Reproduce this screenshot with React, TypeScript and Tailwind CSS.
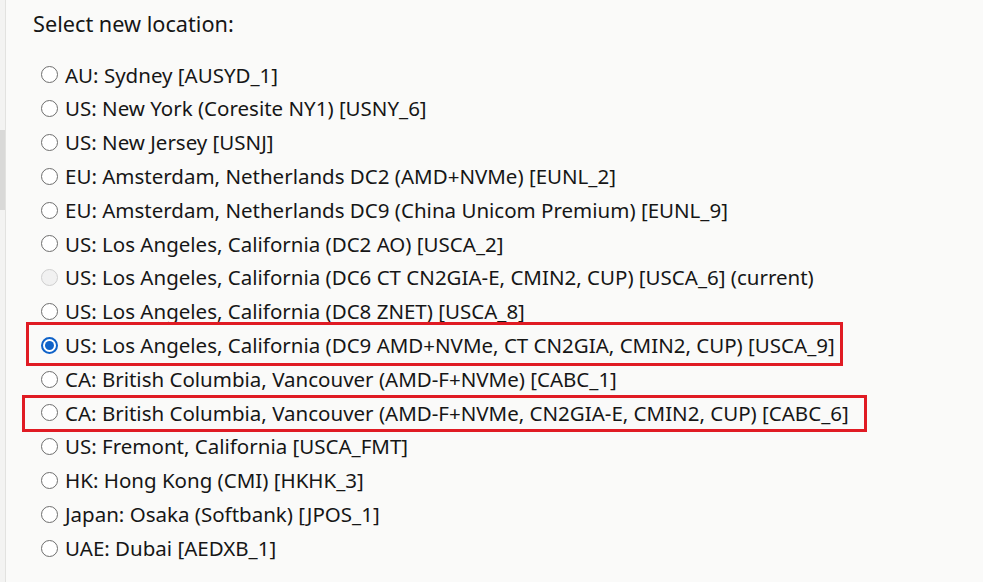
import React from "react"

type Loc = { label: string; disabled?: boolean; checked?: boolean }

const locations: Loc[] = [
  { label: "AU: Sydney [AUSYD_1]" },
  { label: "US: New York (Coresite NY1) [USNY_6]" },
  { label: "US: New Jersey [USNJ]" },
  { label: "EU: Amsterdam, Netherlands DC2 (AMD+NVMe) [EUNL_2]" },
  { label: "EU: Amsterdam, Netherlands DC9 (China Unicom Premium) [EUNL_9]" },
  { label: "US: Los Angeles, California (DC2 AO) [USCA_2]" },
  { label: "US: Los Angeles, California (DC6 CT CN2GIA-E, CMIN2, CUP) [USCA_6] (current)", disabled: true },
  { label: "US: Los Angeles, California (DC8 ZNET) [USCA_8]" },
  { label: "US: Los Angeles, California (DC9 AMD+NVMe, CT CN2GIA, CMIN2, CUP) [USCA_9]", checked: true },
  { label: "CA: British Columbia, Vancouver (AMD-F+NVMe) [CABC_1]" },
  { label: "CA: British Columbia, Vancouver (AMD-F+NVMe, CN2GIA-E, CMIN2, CUP) [CABC_6]" },
  { label: "US: Fremont, California [USCA_FMT]" },
  { label: "HK: Hong Kong (CMI) [HKHK_3]" },
  { label: "Japan: Osaka (Softbank) [JPOS_1]" },
  { label: "UAE: Dubai [AEDXB_1]" },
]

function Radio({ checked, disabled }: { checked?: boolean; disabled?: boolean }) {
  if (checked) {
    return (
      <span className="w-[17px] h-[17px] rounded-full border-[2px] border-[#0f62c8] bg-white flex items-center justify-center shrink-0">
        <span className="w-[9px] h-[9px] rounded-full bg-[#0f62c8]" />
      </span>
    )
  }
  return (
    <span
      className={
        disabled
          ? "w-[17px] h-[17px] rounded-full border-[1.5px] border-[#cfcfcf] bg-[#f1f1f1] shrink-0"
          : "w-[17px] h-[17px] rounded-full border-[1.5px] border-[#6e6e6e] bg-white shrink-0"
      }
    />
  )
}

export default function App() {
  return (
    <div
      className="relative flex w-[983px] h-[582px] bg-[#fafaf9] text-[#161616] overflow-hidden"
      style={{ fontFamily: '"Noto Sans", "Open Sans", sans-serif' }}
    >
      {/* page edge / scroll strip */}
      <div className="w-[6px] h-full bg-[#f3f3f2] border-r border-[#e2e2e0] pt-[130px]">
        <div className="w-[5px] h-[80px] bg-[#d9d9d8]" />
      </div>

      <div className="flex-1 flex flex-col">
        <h2 className="pl-[27px] pt-[9px] text-[21.7px] leading-[30px]">Select new location:</h2>
        <ul className="mt-[19px] flex flex-col">
          {locations.map((l) => (
            <li key={l.label} className="h-[33.8px] flex items-center gap-[7px] pl-[35px] text-[20.5px]">
              <Radio checked={l.checked} disabled={l.disabled} />
              <span className="whitespace-nowrap leading-none">{l.label}</span>
            </li>
          ))}
        </ul>
      </div>

      {/* highlight annotations */}
      <div className="absolute left-[26px] top-[322px] w-[817px] h-[44px] border-[3px] border-[#e01b24]" />
      <div className="absolute left-[22px] top-[395px] w-[845px] h-[37px] border-[3px] border-[#e01b24]" />
    </div>
  )
}
